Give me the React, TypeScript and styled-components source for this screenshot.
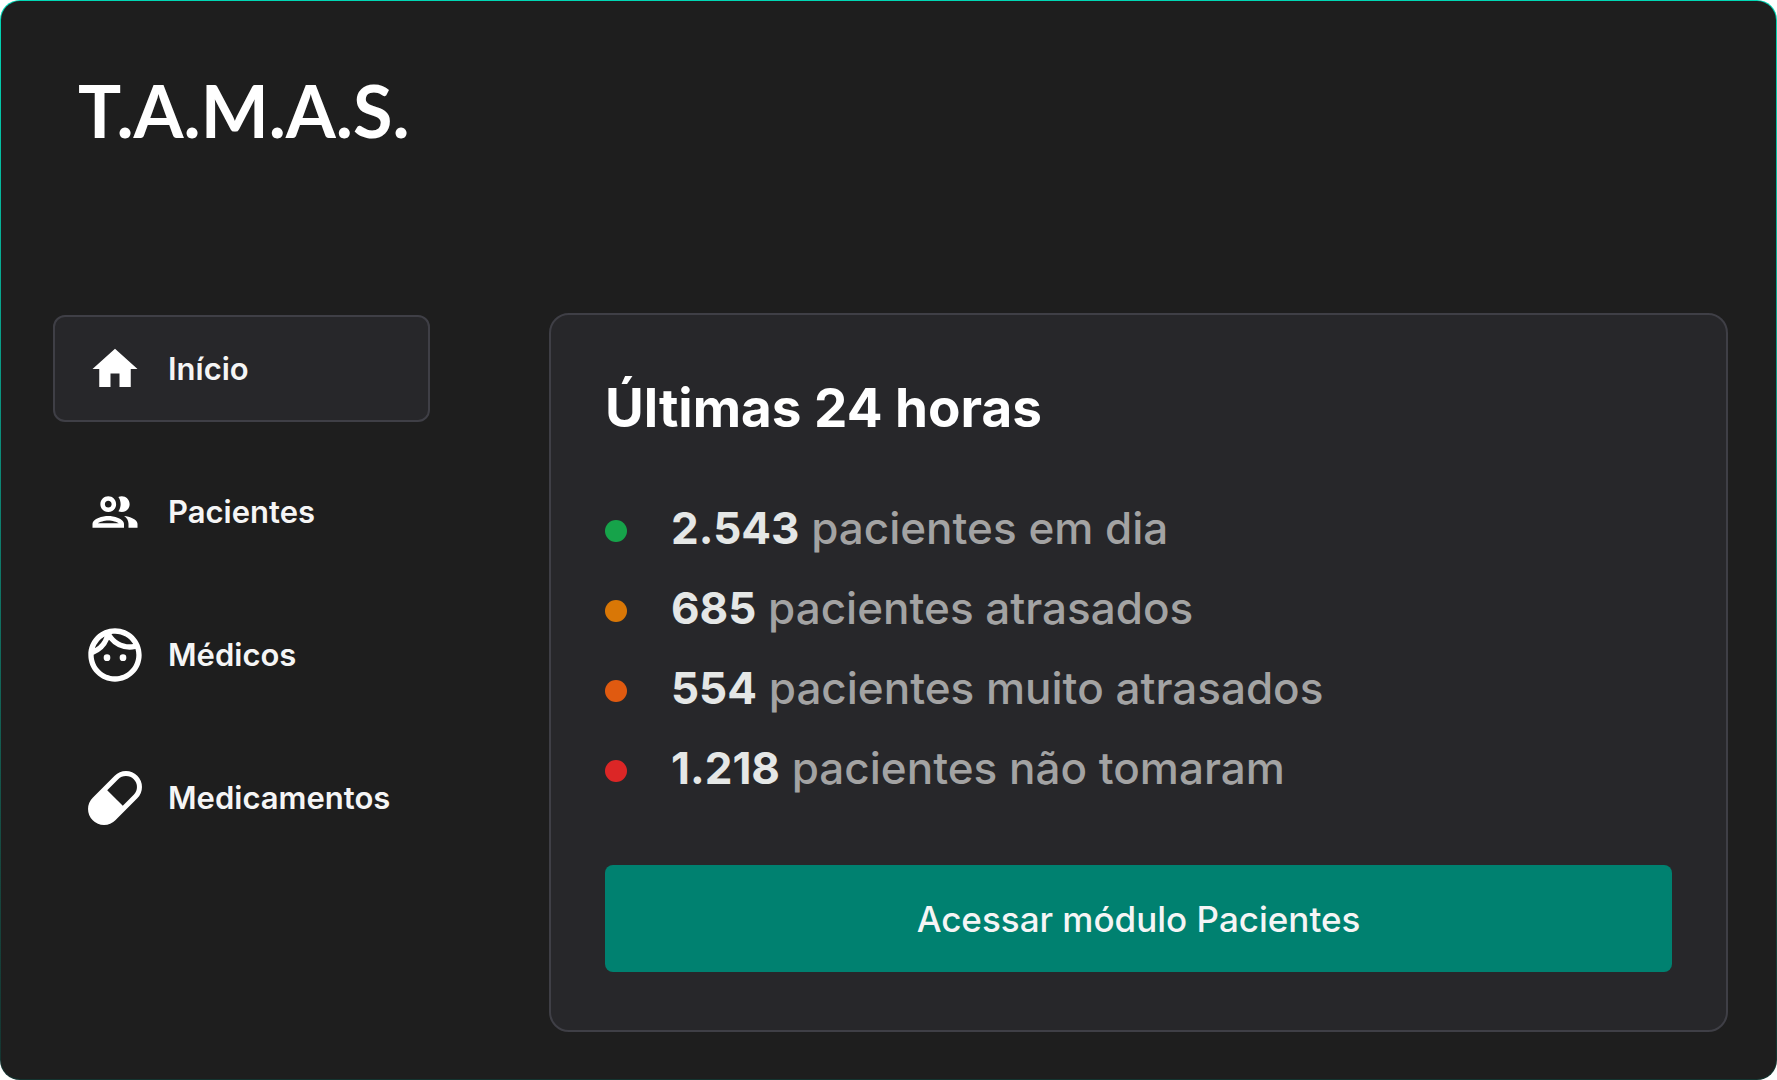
import React from "react";
import styled, { createGlobalStyle } from "styled-components";
import { MdHome, MdOutlineFace } from "react-icons/md";

const GlobalStyle = createGlobalStyle`
  *, *::before, *::after { box-sizing: border-box; }
  body {
    margin: 0;
    background: #ffffff;
    font-family: Inter, "Liberation Sans", sans-serif;
  }
`;

const Shell = styled.div`
  display: flex;
  flex-direction: column;
  min-height: 100vh;
  padding: 69px 48px 46px 52px;
  border: 1px solid transparent;
  border-radius: 20px;
  background:
    linear-gradient(#1e1e1e, #1e1e1e) padding-box,
    linear-gradient(to bottom, #00d8b6 0%, #0b8f7c 40%, #17483f 80%, #143430 100%) border-box;
`;

const Header = styled.header`
  padding: 0 25px;
`;

const Logo = styled.h1`
  margin: 0;
  font-family: Lato, "Liberation Sans", sans-serif;
  font-size: 72px;
  font-weight: 700;
  line-height: 80px;
  color: #ffffff;
`;

const Body = styled.div`
  display: flex;
  align-items: flex-start;
  gap: 119px;
  margin-top: 163px;
`;

const Nav = styled.nav`
  display: flex;
  flex: 0 0 377px;
  flex-direction: column;
  gap: 36px;
  padding-top: 2px;
`;

const NavLink = styled.a<{ $active?: boolean }>`
  display: flex;
  align-items: center;
  gap: 21px;
  height: 107px;
  padding: 0 28px;
  border: 2px solid ${(p) => (p.$active ? "#3f3f46" : "transparent")};
  border-radius: 12px;
  background: ${(p) => (p.$active ? "#27272a" : "transparent")};
  color: #f5f5f5;
  font-size: 31px;
  font-weight: 600;
  line-height: 40px;
  text-decoration: none;
`;

const IconSlot = styled.span`
  display: flex;
  flex: 0 0 64px;
  align-items: center;
  justify-content: center;
  color: #ffffff;
`;

const Panel = styled.main`
  flex: 1;
  min-width: 0;
  padding: 61px 54px 58px;
  border: 2px solid #3f3f46;
  border-radius: 20px;
  background: #27272a;
`;

const Title = styled.h2`
  margin: 0 0 48px;
  color: #ffffff;
  font-size: 53px;
  font-weight: 700;
  line-height: 64px;
`;

const Stats = styled.ul`
  margin: 0 0 57px;
  padding: 0;
  list-style: none;
`;

const Stat = styled.li`
  display: flex;
  align-items: center;
  gap: 44px;
  color: #a3a3a3;
  font-size: 44px;
  font-weight: 500;
  line-height: 80px;
`;

const Dot = styled.span<{ $color: string }>`
  flex: 0 0 22px;
  height: 22px;
  margin-top: 5px;
  border-radius: 50%;
  background: ${(p) => p.$color};
`;

const Count = styled.strong`
  color: #e5e7e6;
  font-weight: 700;
`;

const Action = styled.button`
  display: block;
  width: 100%;
  height: 107px;
  padding: 0 32px;
  border: 0;
  border-radius: 8px;
  background: #008170;
  color: #f5f5f5;
  font-family: inherit;
  font-size: 35px;
  font-weight: 500;
  line-height: 48px;
  cursor: pointer;
`;

const PeopleIcon = () => (
  <svg width="54" height="54" viewBox="0 0 24 24" fill="currentColor" aria-hidden="true">
    <path d="M9 13.75c-2.34 0-7 1.17-7 3.5V19h14v-1.75c0-2.33-4.66-3.5-7-3.5zM4.34 17c.84-.58 2.87-1.25 4.66-1.25s3.82.67 4.66 1.25H4.34zM9 12c1.93 0 3.5-1.57 3.5-3.5S10.93 5 9 5 5.5 6.57 5.5 8.5 7.07 12 9 12zm0-5c.83 0 1.5.67 1.5 1.5S9.83 10 9 10s-1.5-.67-1.5-1.5S8.17 7 9 7zm7.04 6.81c1.16.84 1.96 1.96 1.96 3.44V19h4v-1.75c0-2.02-3.5-3.17-5.96-3.44zM15 12c1.93 0 3.5-1.57 3.5-3.5S16.93 5 15 5c-.54 0-1.04.13-1.5.35.63.89 1 1.98 1 3.15s-.37 2.26-1 3.15c.46.22.96.35 1.5.35z" />
  </svg>
);

const PillIcon = () => (
  <svg width="54" height="54" viewBox="0 0 54 54" aria-hidden="true">
    <g transform="rotate(-45 27 27)">
      <path
        fill="currentColor"
        fillRule="evenodd"
        d="M11.5 11h31a16 16 0 0 1 0 32h-31a16 16 0 0 1 0-32zM27 16v22h15.5a11 11 0 0 0 0-22z"
      />
    </g>
  </svg>
);

const links = [
  { label: "Início", icon: <MdHome size={54} />, active: true },
  { label: "Pacientes", icon: <PeopleIcon /> },
  { label: "Médicos", icon: <MdOutlineFace size={64} /> },
  { label: "Medicamentos", icon: <PillIcon /> },
];

const stats = [
  { count: "2.543", text: "pacientes em dia", color: "#16a34a" },
  { count: "685", text: "pacientes atrasados", color: "#d97706" },
  { count: "554", text: "pacientes muito atrasados", color: "#e05a10" },
  { count: "1.218", text: "pacientes não tomaram", color: "#dc2626" },
];

export default function App() {
  return (
    <>
      <GlobalStyle />
      <Shell>
        <Header>
          <Logo>T.A.M.A.S.</Logo>
        </Header>
        <Body>
          <Nav>
            {links.map((link) => (
              <NavLink
                key={link.label}
                href="#"
                $active={link.active}
                aria-current={link.active ? "page" : undefined}
              >
                <IconSlot>{link.icon}</IconSlot>
                {link.label}
              </NavLink>
            ))}
          </Nav>
          <Panel>
            <Title>Últimas 24 horas</Title>
            <Stats>
              {stats.map((stat) => (
                <Stat key={stat.count}>
                  <Dot $color={stat.color} />
                  <span>
                    <Count>{stat.count}</Count> {stat.text}
                  </span>
                </Stat>
              ))}
            </Stats>
            <Action type="button">Acessar módulo Pacientes</Action>
          </Panel>
        </Body>
      </Shell>
    </>
  );
}
